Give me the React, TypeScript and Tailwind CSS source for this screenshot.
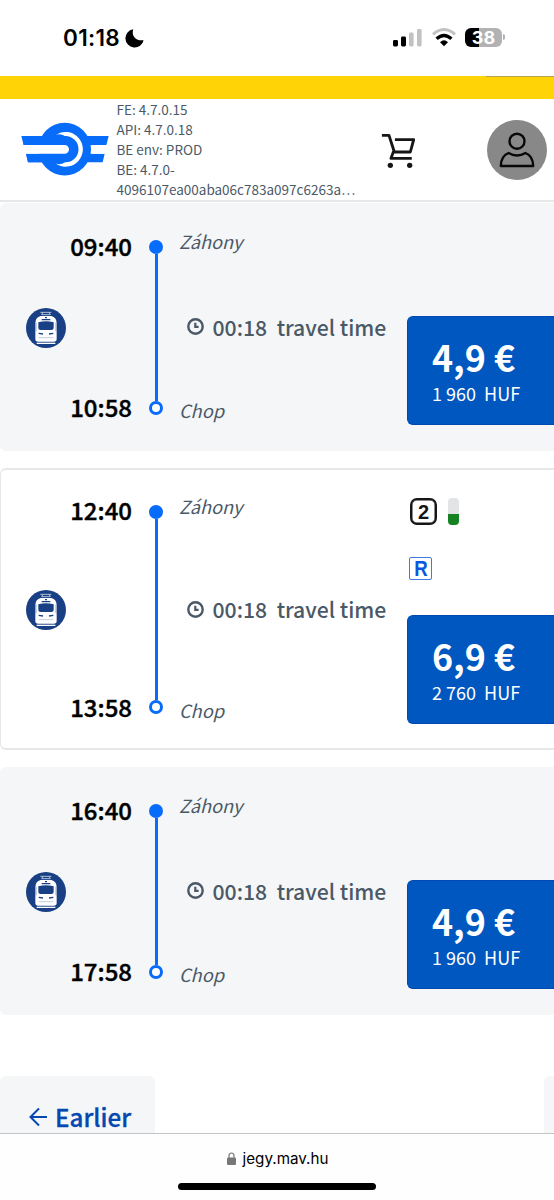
import React from "react";

const sans = "font-['Noto_Sans_CJK_SC','Noto_Sans',sans-serif]";

function StatusBar() {
  return (
    <div className="flex h-[76px] shrink-0 items-start justify-between pl-[63px] pr-[49px] font-['Inter',sans-serif]">
      <div className="flex items-center pt-[25px]">
        <span className="w-[58px] whitespace-nowrap text-[22.5px] font-semibold leading-[26px] tracking-[0.3px] text-black">01:18</span>
        <svg className="ml-[4px] h-5 w-5" viewBox="0 0 20 20">
          <path d="M8.2 1.2C6.3 7.8 10.5 13.3 18.6 12.2A9.2 9.2 0 1 1 8.2 1.2Z" fill="#000" />
        </svg>
      </div>
      <div className="mt-[27px] flex h-[20px] items-center">
        <svg className="h-[19px] w-[29px]" viewBox="0 0 29 19">
          <rect x="0" y="12" width="5" height="6.5" rx="1.4" fill="#000" />
          <rect x="8" y="8.5" width="5" height="10" rx="1.4" fill="#000" />
          <rect x="16" y="4.5" width="4.6" height="14" rx="1.4" fill="#c2c2c4" />
          <rect x="24" y="1" width="4.6" height="17.5" rx="1.4" fill="#c2c2c4" />
        </svg>
        <svg className="ml-[9px] h-[19px] w-[26px]" viewBox="0 0 26 19">
          <path d="M2 6.3Q13-3.2 24 6.3" fill="none" stroke="#c2c2c4" strokeWidth="3" />
          <path d="M5.6 10.8Q13 4.2 20.4 10.8" fill="none" stroke="#000" strokeWidth="3.4" />
          <path d="M9 14.2Q13 10.2 17 14.2L13 18.2Z" fill="#000" />
        </svg>
        <div className="ml-[8px] flex h-[19px] w-[37px] items-center justify-center rounded-[6px] bg-[linear-gradient(90deg,#000_14px,#b2b2b4_14px)] text-[18px] font-bold leading-[19px] text-white">38</div>
        <div className="ml-[1px] h-[6px] w-[2px] rounded-r-full bg-[#b2b2b4]" />
      </div>
    </div>
  );
}

function Logo() {
  return (
    <svg className="h-[57px] w-[89px]" viewBox="19 50 267 171">
      <circle cx="150" cy="134.5" r="79" fill="#086cfa" />
      <path d="M20 95H282L275 123H27ZM34 148H270L264 174H40Z" fill="#086cfa" />
      <path d="M122 93A52 52 0 1 1 122 177Q136 184 152 173A39 39 0 0 0 152 96Q136 86 122 93Z" fill="#fff" />
      <path d="M24 95H152A39.5 39.5 0 0 1 152 174H40L34 148H150A13 13 0 0 0 150 122H27Z" fill="#086cfa" />
      <path d="M20 122H150A13 13 0 0 1 150 148H20ZM231 122H286V148H231Z" fill="#fff" />
    </svg>
  );
}

function Header() {
  return (
    <header className="flex h-[103px] shrink-0 items-center border-b-2 border-[#e5e7e9] bg-white pl-[21px] pr-[7px]">
      <Logo />
      <div className="ml-[6.5px] w-[245px] whitespace-nowrap pb-px text-[13.5px] leading-[20px] text-[#4b5967]">
        <p>FE: 4.7.0.15</p>
        <p>API: 4.7.0.18</p>
        <p>BE env: PROD</p>
        <p>BE: 4.7.0-</p>
        <p>4096107ea00aba06c783a097c6263a…</p>
      </div>
      <svg className="ml-[19.5px] mt-px h-[36px] w-[34px] shrink-0" viewBox="0 0 102 108" fill="none" stroke="#161616" strokeWidth="8.5" strokeLinecap="square" strokeLinejoin="round">
        <path d="M7 10H24L40 60H88L98 23H46M37 60L30 79H88" />
        <circle cx="28" cy="100" r="8" fill="#161616" stroke="none" />
        <circle cx="86" cy="100" r="8" fill="#161616" stroke="none" />
      </svg>
      <div className="ml-auto flex h-[60px] w-[60px] shrink-0 items-center justify-center rounded-full bg-[#888]">
        <svg className="h-[36px] w-[36px]" viewBox="0 0 36 36" fill="none" stroke="#080808" strokeWidth="2.4">
          <circle cx="18" cy="9.2" r="7.5" />
          <path d="M1.8 34H34.2C34 27.5 31.5 22.9 26.5 21Q18 26 9.5 21C4.5 22.9 2 27.5 1.8 34Z" strokeLinejoin="round" />
        </svg>
      </div>
    </header>
  );
}

function Train() {
  return (
    <svg className="h-10 w-10" viewBox="0 0 120 120">
      <circle cx="60" cy="60" r="60" fill="#194084" />
      <path d="M43 13H76M51 13L47 20M69 13L73 20M47 20H73" stroke="#cbd7e8" strokeWidth="2.5" fill="none" />
      <path d="M44 24H76Q92 28 92 45V93Q92 101 83 101H37Q28 101 28 93V45Q28 28 44 24Z" fill="#fff" />
      <path d="M47 35H73M57 29H63" stroke="#194084" strokeWidth="4" />
      <path d="M37 43Q60 37 83 43V60Q83 66 76 66H44Q37 66 37 60Z" fill="#194084" />
      <path d="M30 44V70M90 44V70" stroke="#8299bd" strokeWidth="2.5" />
      <path d="M38 76L51 78M82 76L69 78" stroke="#194084" strokeWidth="4" />
      <path d="M38 89H82" stroke="#a5b5cc" strokeWidth="2" />
      <path d="M32 106H88" stroke="#fff" strokeWidth="4" />
    </svg>
  );
}

type Trip = { start: string; end: string; price: string; huf: string; featured?: boolean };

function TripCard({ start, end, price, huf, featured }: Trip) {
  return (
    <article className={featured ? "flex h-[282px] shrink-0 rounded-l-[6px] border-y-2 border-l border-[#e5e7e9] bg-white pb-[24px] pt-[23px]" : "flex h-[248px] shrink-0 rounded-l-[6px] bg-[#f4f6f8] pb-[26px] pt-[24px]"}>
      <div className={featured ? "flex w-[65px] items-center pl-[25px] pt-[3px]" : "flex w-[66px] items-center pl-[26px] pt-[3px]"}>
        <Train />
      </div>
      <div className={featured ? "flex w-[66px] flex-col items-end justify-between text-[24px] font-medium leading-[34px] text-black [-webkit-text-stroke:0.4px_#000]" : "flex w-[66px] flex-col items-end justify-between pb-px pt-[2px] text-[24px] font-medium leading-[34px] text-black [-webkit-text-stroke:0.4px_#000]"}>
        <span>{start}</span>
        <span>{end}</span>
      </div>
      <div className={featured ? "ml-[17px] flex w-[14px] flex-col items-center pb-[10px] pt-[12px]" : "ml-[17px] flex w-[14px] flex-col items-center pb-[10px] pt-[13px]"}>
        <div className="h-[14px] w-[14px] shrink-0 rounded-full bg-[#086cfa]" />
        <div className="w-[3px] grow bg-[#086cfa]" />
        <div className="h-[14px] w-[14px] shrink-0 rounded-full border-[3.5px] border-[#086cfa] bg-white" />
      </div>
      <div className={featured ? "ml-[16px] flex w-[208px] flex-col justify-between whitespace-nowrap text-[#4b5967]" : "ml-[16px] flex w-[208px] flex-col justify-between whitespace-nowrap pb-px text-[#4b5967]"}>
        <span className={featured ? "-mt-px text-[18.2px] italic leading-[28px]" : "text-[18.2px] italic leading-[28px]"}>Záhony</span>
        <div className="flex items-center pl-[8px] pt-[2px] text-[21.2px] font-medium leading-[30px]">
          <svg className="h-[17px] w-[17px] shrink-0" viewBox="0 0 17 17" fill="none" stroke="currentColor">
            <circle cx="8.5" cy="8.5" r="7.2" strokeWidth="2.4" />
            <path d="M8.3 4.7V8.8H11.6" strokeWidth="2.2" />
          </svg>
          <span className="ml-[8.5px]">00:18</span>
          <span className="ml-[9.5px]">travel time</span>
        </div>
        <span className="text-[18.2px] italic leading-[28px]">Chop</span>
      </div>
      <div className="ml-[20px] flex grow flex-col justify-end">
        {featured && (
          <div className="mb-auto pl-[3px] pt-[5px]">
            <div className="flex items-center">
              <div className="flex h-[27px] w-[27px] items-center justify-center rounded-[7px] border-2 border-[#161616] font-['Liberation_Sans',sans-serif] text-[20px] font-bold leading-none text-[#161616] shadow-[inset_0_0_0_0.5px_#161616]">2</div>
              <div className="ml-[11px] h-[27px] w-[11px] rounded-[4px] bg-[linear-gradient(#e2e4e6_16px,#168322_16px)]" />
            </div>
            <div className="-ml-px mt-[32px] flex h-[23px] w-[23px] items-center justify-center rounded-[2px] border border-[#3f7be0] font-['Liberation_Sans',sans-serif] text-[22px] font-bold leading-none text-[#0b58df]"><span className="scale-x-85">R</span></div>
          </div>
        )}
        <button className="flex h-[109px] flex-col items-start rounded-l-[6px] border-y border-l border-[#0049b2] bg-[#0057c0] pl-[24px] pt-[17px] text-white">
          <span className="text-[35.8px] font-bold leading-[44px]">{price}</span>
          <span className="whitespace-pre pt-px text-[18px] leading-[28px]">{huf}</span>
        </button>
      </div>
    </article>
  );
}

export default function App() {
  return (
    <div className={`flex h-[1200px] w-[554px] flex-col overflow-hidden bg-white ${sans}`}>
      <StatusBar />
      <div className="flex h-[23px] shrink-0 justify-end bg-[#ffd306]">
        <div className="h-px w-[68px] bg-[#b3a64a]" />
      </div>
      <Header />
      <main className="flex h-[931px] shrink-0 flex-col overflow-hidden pt-px">
        <TripCard start="09:40" end="10:58" price="4,9 €" huf={"1 960  HUF"} />
        <div className="h-[17px] shrink-0" />
        <TripCard start="12:40" end="13:58" price="6,9 €" huf={"2 760  HUF"} featured />
        <div className="h-[17px] shrink-0" />
        <TripCard start="16:40" end="17:58" price="4,9 €" huf={"1 960  HUF"} />
        <div className="mt-[61px] flex shrink-0 justify-between">
          <button className="flex h-[82px] w-[155px] items-center rounded-[6px] bg-[#f4f6f8] pl-[29px] text-[24.2px] font-medium text-[#0647b0] [-webkit-text-stroke:0.3px_#0647b0]">
            <svg className="h-[20px] w-[20px]" viewBox="0 0 20 20" fill="none" stroke="currentColor" strokeWidth="2">
              <path d="M18 10H1.5M10 1.5L1.5 10L10 18.5" />
            </svg>
            <span className="ml-[6px]">Earlier</span>
          </button>
          <div className="h-[82px] w-[10px] rounded-l-[6px] bg-[#f4f6f8]" />
        </div>
      </main>
      <footer className="flex grow flex-col items-center border-t border-[#c4c4c6] bg-[#fefefe]">
        <div className="mt-[13px] flex items-center pl-px font-['Inter',sans-serif] text-[15.2px] leading-[23px] text-black">
          <svg className="mr-[7px] h-[13px] w-[9px]" viewBox="0 0 9 13">
            <rect y="5.5" width="9" height="7.5" rx="1.3" fill="#77777a" />
            <path d="M2 6V3.5A2.5 2.5 0 0 1 7 3.5V6" fill="none" stroke="#77777a" strokeWidth="1.2" />
          </svg>
          <span>jegy.mav.hu</span>
        </div>
        <div className="mt-[13px] h-[7px] w-[198px] rounded-full bg-black" />
      </footer>
    </div>
  );
}
